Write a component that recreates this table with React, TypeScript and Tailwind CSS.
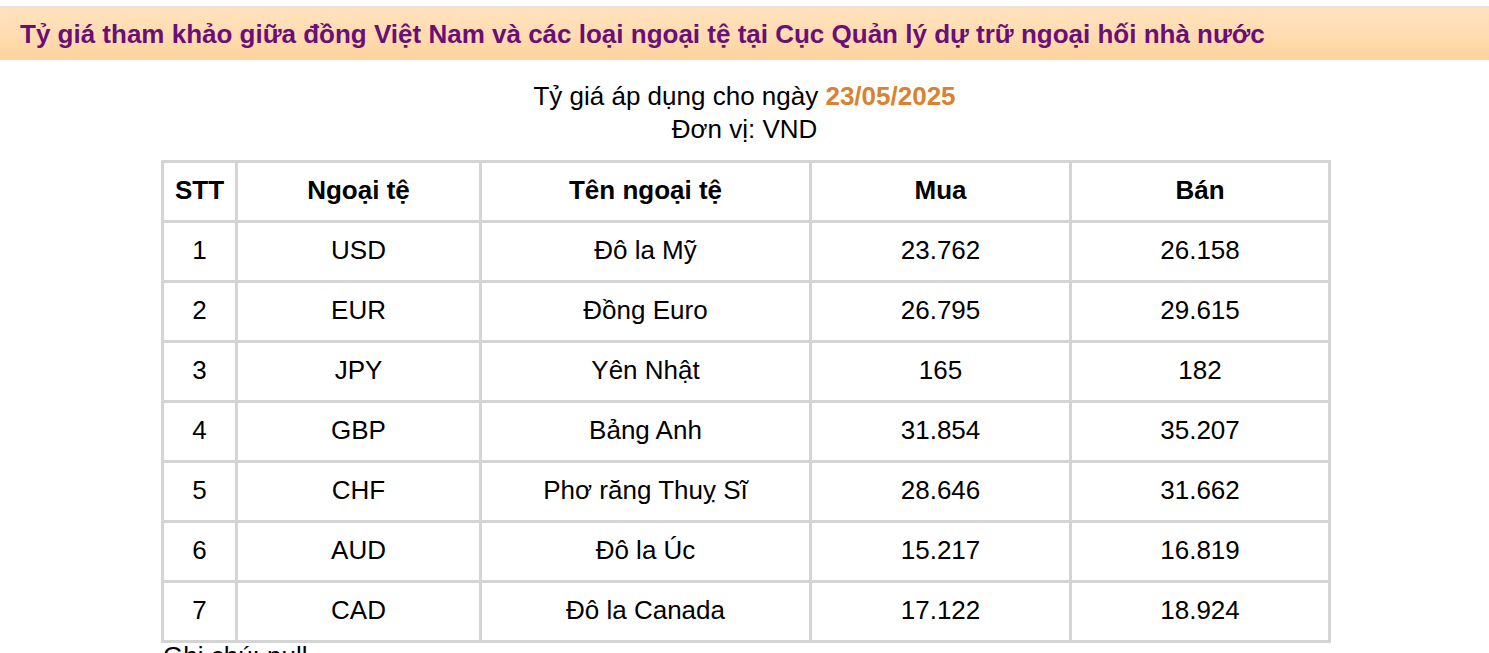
const rows = [
  ['1', 'USD', 'Đô la Mỹ', '23.762', '26.158'],
  ['2', 'EUR', 'Đồng Euro', '26.795', '29.615'],
  ['3', 'JPY', 'Yên Nhật', '165', '182'],
  ['4', 'GBP', 'Bảng Anh', '31.854', '35.207'],
  ['5', 'CHF', 'Phơ răng Thuỵ Sĩ', '28.646', '31.662'],
  ['6', 'AUD', 'Đô la Úc', '15.217', '16.819'],
  ['7', 'CAD', 'Đô la Canada', '17.122', '18.924'],
];

export default function App() {
  return (
    <div className="min-h-screen bg-white font-['Liberation_Sans',Arial,sans-serif] text-black">
      <div className="pt-[6px]">
        <div className="border-t-2 border-[#e4e4e4] bg-gradient-to-b from-[#ffe2bd] via-[#ffdcb2] to-[#fdd39c] h-[54px] flex items-center px-5">
          <h1 className="text-[26px] font-bold text-[#6a0f78]">
            Tỷ giá tham khảo giữa đồng Việt Nam và các loại ngoại tệ tại Cục Quản lý dự trữ ngoại hối nhà nước
          </h1>
        </div>
      </div>

      <div className="mt-[20px] text-center text-[26px] leading-[33px]">
        <p>
          Tỷ giá áp dụng cho ngày <span className="font-bold text-[#d9822f]">23/05/2025</span>
        </p>
        <p>Đơn vị: VND</p>
      </div>

      <table className="ml-[161px] mt-[14px] w-[1167px] table-fixed border-collapse border-[3px] border-[#d4d4d4] text-[26px] text-center">
        <colgroup>
          <col className="w-[74px]" />
          <col className="w-[244px]" />
          <col className="w-[330px]" />
          <col className="w-[260px]" />
          <col className="w-[259px]" />
        </colgroup>
        <thead>
          <tr className="h-[60px]">
            {['STT', 'Ngoại tệ', 'Tên ngoại tệ', 'Mua', 'Bán'].map((h) => (
              <th key={h} className="border-[3px] border-[#d4d4d4] pb-[2px] font-bold">
                {h}
              </th>
            ))}
          </tr>
        </thead>
        <tbody>
          {rows.map((r) => (
            <tr key={r[0]} className="h-[60px]">
              {r.map((c, i) => (
                <td key={i} className="border-[3px] border-[#d4d4d4] pb-[2px]">
                  {c}
                </td>
              ))}
            </tr>
          ))}
        </tbody>
      </table>

      <p className="ml-[163px] mt-0 text-[26px] leading-[26px]">Ghi chú: null</p>
    </div>
  );
}
